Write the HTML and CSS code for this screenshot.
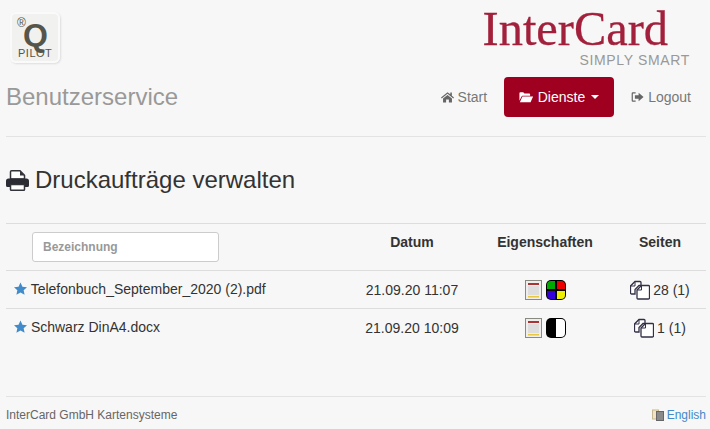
FILE: index.html
```html
<!DOCTYPE html>
<html lang="de">
<head>
<meta charset="utf-8">
<title>Druckaufträge verwalten</title>
<link rel="stylesheet" href="styles.css">
</head>
<body>
<header class="brand-row">
  <div class="qpilot">
    <span class="qp-reg">®</span>
    <span class="qp-q">Q</span>
    <span class="qp-pilot">PILOT</span>
  </div>
  <div class="intercard">
    <div class="ic-name">InterCard</div>
    <div class="ic-sub">SIMPLY SMART</div>
  </div>
</header>
<nav class="navbar">
  <div class="nav-title">Benutzerservice</div>
  <ul class="nav-list">
    <li class="nav-item">
      <svg class="nav-icon" viewBox="0 0 14 12"><path d="M7 .8 0 6.600l.8 1L7 2.600l6.200 5 .8-1-2.300-1.900V1.200H10v1.900L7 .8zM2.200 7.700V12h3.300V8.700h3V12h3.300V7.700L7 3.800 2.200 7.700z" fill="#666"/></svg>
      Start
    </li>
    <li class="nav-item nav-active">
      <svg class="nav-icon-folder" viewBox="0 0 17 13"><path d="M.5 11V2q0-1 1-1h3.500l1.300 1.500H12q1 0 1 1V5H4.200q-.8 0-1.200.8L.5 11zM4 6h12.500L13.500 12.500H1z" fill="#fff"/></svg>
      Dienste <span class="caret"></span>
    </li>
    <li class="nav-item">
      <svg class="nav-icon" viewBox="0 0 14 12"><path d="M5 1H2Q.7 1 .7 2.300v7.400Q.7 11 2 11h3V9.700H2.300Q2 9.700 2 9.400V2.600q0-.3.3-.3H5V1z" fill="#666"/><path d="M8.200 1.500 13.500 6 8.200 10.500V8H4.200V4h4V1.500z" fill="#666"/></svg>
      Logout
    </li>
  </ul>
</nav>
<hr class="rule">
<main>
  <h1 class="page-title">
    <svg class="print-icon" viewBox="0 0 23 21"><path fill="#fff" stroke="#33333b" stroke-width="1.500" d="M4.500 9V1.800q0-1 1-1h8.500l4.500 4.500V9z"/><path fill="#33333b" d="M14 1v4.500h4.500z"/><path fill="#2b2b33" d="M2.500 8.500h18Q23 8.500 23 11v4.500q0 1.500-1.500 1.500h-3v-2.500h-14V17h-3Q0 17 0 15.500V11q0-2.500 2.500-2.500z"/><path fill="#fff" stroke="#33333b" stroke-width="1.500" d="M4.500 14.500h14v5q0 .8-.8.800H5.300q-.8 0-.8-.8z"/></svg>
    Druckaufträge verwalten
  </h1>
  <table class="jobs">
    <colgroup>
      <col class="col-name"><col class="col-date"><col class="col-props"><col class="col-pages">
    </colgroup>
    <thead>
      <tr>
        <th class="th-filter"><input class="filter" type="text" placeholder="Bezeichnung"></th>
        <th>Datum</th>
        <th>Eigenschaften</th>
        <th class="th-pages">Seiten</th>
      </tr>
    </thead>
    <tbody>
      <tr>
        <td class="name">
          <svg class="star" viewBox="0 0 14 14"><path fill="#428bca" d="m7 0 2.100 4.500 4.900.6-3.600 3.300 1 4.900L7 10.900l-4.400 2.400 1-4.900L0 5.100l4.900-.6z"/></svg>
          Telefonbuch_September_2020 (2).pdf
        </td>
        <td class="center">21.09.20 11:07</td>
        <td class="center">
          <span class="props">
            <svg class="doc" viewBox="0 0 17 20"><rect x=".5" y=".5" width="16" height="19" fill="#eee" stroke="#8a8a80"/><rect x="3" y="3" width="11" height="2" fill="#a33"/><rect x="3" y="6" width="11" height="9" fill="#ddd"/><rect x="3" y="16" width="11" height="1.500" fill="#e8c840"/></svg>
            <svg class="mode" viewBox="0 0 20 20"><rect width="20" height="20" rx="5" fill="#000"/><path fill="#0a0" d="M1 5q0-4 4-4h4v8H1z"/><path fill="#e00" d="M11 1h4q4 0 4 4v4h-8z"/><path fill="#30d" d="M1 11h8v8H5q-4 0-4-4z"/><path fill="#ee0" d="M11 11h8v4q0 4-4 4h-4z"/></svg>
          </span>
        </td>
        <td class="center">
          <span class="pages">
            <svg class="copies" viewBox="0 0 20 20"><path fill="#fff" stroke="#333045" stroke-width="1.300" d="M5 1.500h5q1 0 1 1v3H9L5 9.500V14H1.500q-1 0-1-1V6z"/><path fill="none" stroke="#333045" d="M5 1.500V6H.5"/><path fill="#fff" stroke="#333045" stroke-width="1.300" d="M11.500 5.500h7q1 0 1 1v11.500q0 1-1 1H8q-1 0-1-1V10z"/><path fill="none" stroke="#333045" d="M11.500 5.500V10H7"/></svg>
            28 (1)
          </span>
        </td>
      </tr>
      <tr>
        <td class="name">
          <svg class="star" viewBox="0 0 14 14"><path fill="#428bca" d="m7 0 2.100 4.500 4.900.6-3.600 3.300 1 4.900L7 10.900l-4.400 2.400 1-4.900L0 5.100l4.900-.6z"/></svg>
          Schwarz DinA4.docx
        </td>
        <td class="center">21.09.20 10:09</td>
        <td class="center">
          <span class="props">
            <svg class="doc" viewBox="0 0 17 20"><rect x=".5" y=".5" width="16" height="19" fill="#eee" stroke="#8a8a80"/><rect x="3" y="3" width="11" height="2" fill="#a33"/><rect x="3" y="6" width="11" height="9" fill="#ddd"/><rect x="3" y="16" width="11" height="1.500" fill="#e8c840"/></svg>
            <svg class="mode" viewBox="0 0 20 20"><rect width="20" height="20" rx="5" fill="#000"/><path fill="#fff" d="M10 1h5q4 0 4 4v10q0 4-4 4h-5z"/></svg>
          </span>
        </td>
        <td class="center">
          <span class="pages">
            <svg class="copies" viewBox="0 0 20 20"><path fill="#fff" stroke="#333045" stroke-width="1.300" d="M5 1.500h5q1 0 1 1v3H9L5 9.500V14H1.500q-1 0-1-1V6z"/><path fill="none" stroke="#333045" d="M5 1.500V6H.5"/><path fill="#fff" stroke="#333045" stroke-width="1.300" d="M11.500 5.500h7q1 0 1 1v11.500q0 1-1 1H8q-1 0-1-1V10z"/><path fill="none" stroke="#333045" d="M11.500 5.500V10H7"/></svg>
            1 (1)
          </span>
        </td>
      </tr>
    </tbody>
  </table>
</main>
<footer class="footer">
  <span class="company">InterCard GmbH Kartensysteme</span>
  <span class="lang">
    <svg class="lang-icon" viewBox="0 0 12 12"><rect x=".5" y="1" width="6" height="9" fill="#f0e4c8" stroke="#c8b890"/><rect x="4.500" y="2.500" width="7" height="9" fill="#8a8a8a" stroke="#666"/></svg>
    English
  </span>
</footer>
</body>
</html>
```
FILE: styles.css
```css
* { box-sizing: border-box; }
html, body { margin: 0; height: 100%; }
body {
  background: #f7f7f7;
  color: #333;
  font: 14px/20px "Liberation Sans", Arial, sans-serif;
  padding: 0 4px 0 6px;
  overflow: hidden;
}
.brand-row {
  display: flex;
  justify-content: space-between;
  align-items: flex-start;
  height: 77px;
}
.qpilot {
  position: relative;
  width: 50px;
  height: 51px;
  margin: 12px 0 0 4px;
  background: #f1f1ef;
  border-radius: 6px;
  box-shadow: inset 0 0 0 2px #fafafa, 1px 1px 2px #ddd;
  color: #55554b;
}
.qp-reg {
  position: absolute;
  left: 7px;
  top: 4px;
  font-size: 12px;
  line-height: 14px;
}
.qp-q {
  position: absolute;
  left: 13px;
  top: 5px;
  font-size: 32px;
  line-height: 36px;
  font-weight: bold;
}
.qp-pilot {
  position: absolute;
  left: 8px;
  top: 34px;
  font-size: 11px;
  line-height: 14px;
  letter-spacing: .5px;
}
.intercard {
  display: flex;
  flex-direction: column;
  align-items: flex-end;
  margin-right: 16px;
}
.ic-name {
  font: 48.400px/46px "Liberation Serif", serif;
  color: #a2203c;
  margin-top: 6px;
  margin-right: 22px;
  -webkit-text-stroke: .3px #a2203c;
}
.ic-sub {
  font-size: 14px;
  line-height: 16px;
  color: #999;
  letter-spacing: .65px;
}
.navbar {
  display: flex;
  justify-content: space-between;
  align-items: center;
  height: 40px;
}
.nav-title {
  font-size: 24px;
  color: #999;
}
.nav-list {
  display: flex;
  list-style: none;
  margin: 0;
  padding: 0;
}
.nav-item {
  display: flex;
  align-items: center;
  gap: 4px;
  height: 40px;
  padding: 0 15px;
  color: #777;
}
.nav-active {
  background: #a00020;
  color: #fff;
  border-radius: 4px;
  padding: 0 15px;
  width: 110px;
  margin: 0 2px;
}
.nav-icon { width: 13px; height: 12px; }
.nav-icon-folder { width: 15px; height: 12px; }
.caret {
  width: 0;
  height: 0;
  margin-left: 2px;
  border-top: 4px solid #fff;
  border-left: 4px solid transparent;
  border-right: 4px solid transparent;
}
.rule {
  border: 0;
  border-top: 1px solid #e3e3e3;
  margin: 19px 0 0;
}
.page-title {
  display: flex;
  align-items: center;
  gap: 6px;
  margin: 30px 0 0;
  height: 26px;
  font-size: 24px;
  font-weight: 500;
  line-height: 26px;
  color: #333;
}
.print-icon { width: 23px; height: 21px; }
.jobs {
  width: 700px;
  table-layout: fixed;
  border-collapse: collapse;
  margin-top: 30px;
}
.col-name { width: 336px; }
.col-date { width: 140px; }
.col-props { width: 126px; }
.col-pages { width: 98px; }
.jobs th {
  height: 47px;
  border-top: 1px solid #ddd;
  border-bottom: 1px solid #ddd;
  font-size: 14px;
  font-weight: bold;
  text-align: center;
  padding: 8px 0 0;
  vertical-align: top;
}
.jobs .th-filter { text-align: left; padding-left: 26px; }
.jobs .th-pages { padding-left: 6px; }
.filter {
  display: block;
  width: 187px;
  height: 30px;
  border: 1px solid #ccc;
  border-radius: 3px;
  background: #fff;
  padding: 0 10px;
  font: bold 12px "Liberation Sans", Arial, sans-serif;
}
.filter::placeholder { color: #999; opacity: 1; }
.jobs td {
  height: 38px;
  border-bottom: 1px solid #ddd;
  padding: 0;
  vertical-align: middle;
}
.jobs tbody tr:last-child td { border-bottom: 0; }
.jobs td.name { padding: 0 0 2px 8px; }
.jobs td.center { text-align: center; }
.star { width: 13px; height: 14px; vertical-align: -2px; }
.props { display: inline-flex; align-items: center; gap: 4px; vertical-align: middle; }
.doc { width: 17px; height: 20px; }
.mode { width: 20px; height: 20px; }
.pages { display: inline-flex; align-items: center; gap: 3px; padding-left: 6px; vertical-align: middle; }
.copies { width: 20px; height: 20px; }
.footer {
  position: absolute;
  left: 6px;
  right: 4px;
  top: 396px;
  display: flex;
  justify-content: space-between;
  align-items: center;
  height: 33px;
  padding-top: 3px;
  border-top: 1px solid #e3e3e3;
  font-size: 12px;
}
.company { color: #666; }
.lang { color: #428bca; display: flex; align-items: center; gap: 3px; font-size: 12px; }
.lang-icon { width: 12px; height: 12px; }
```
